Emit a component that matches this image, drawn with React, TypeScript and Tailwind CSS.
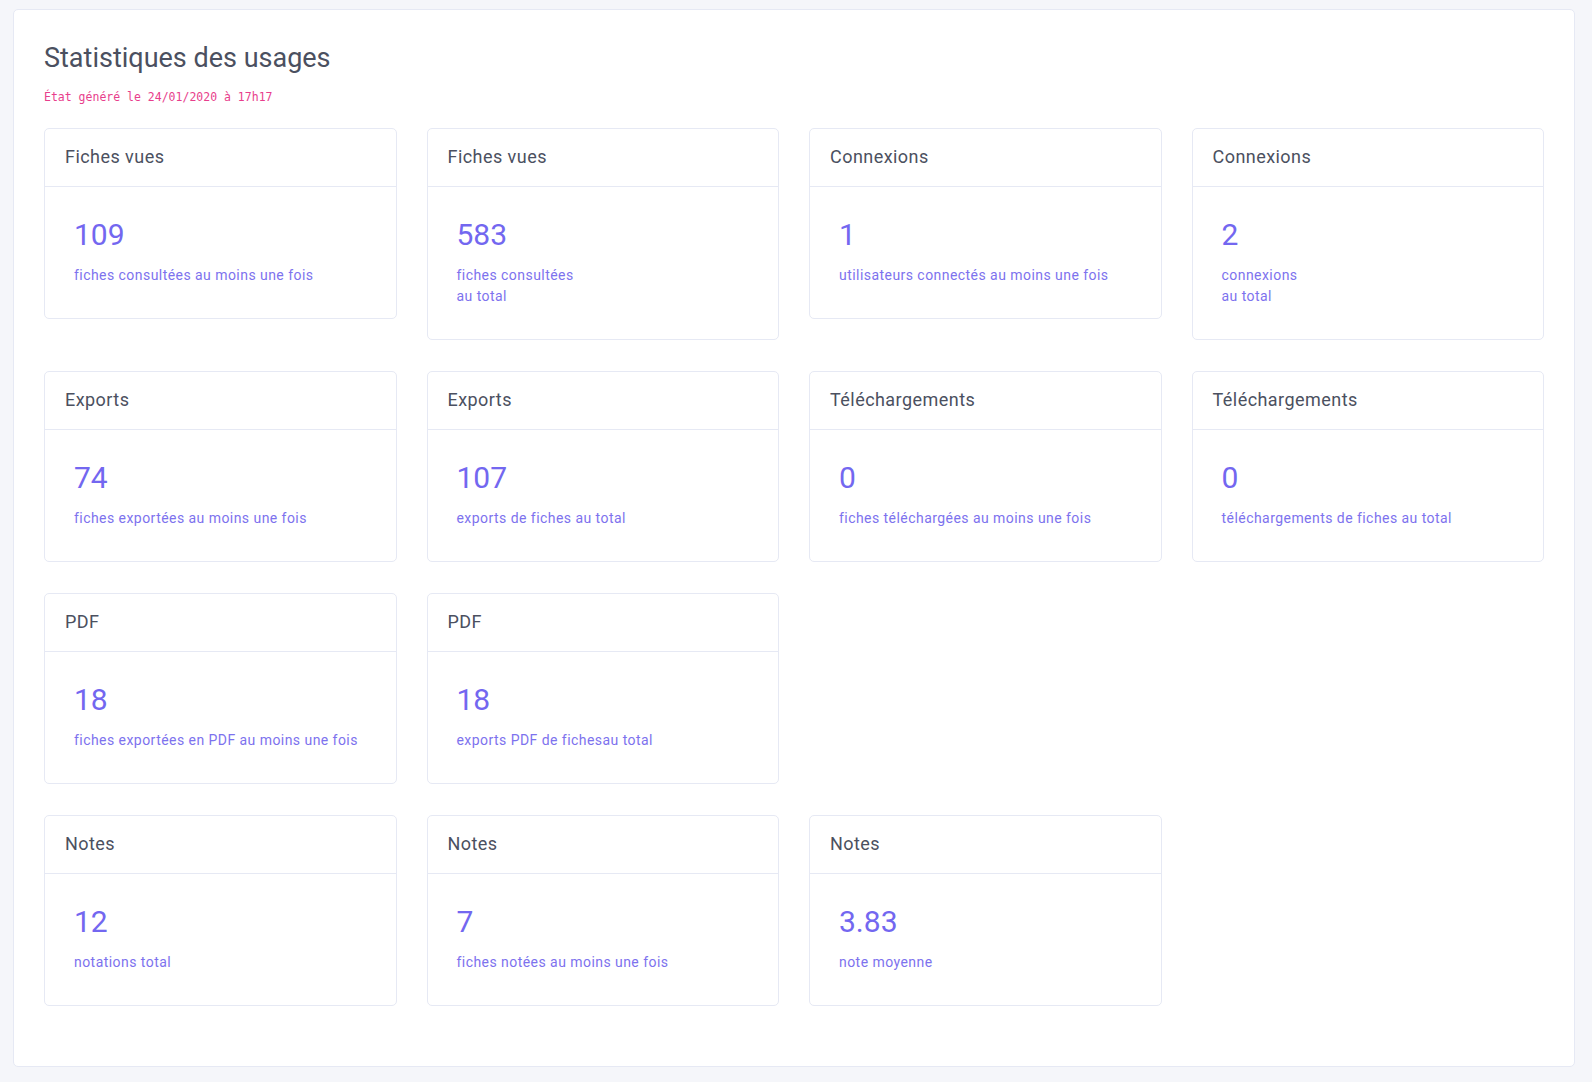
import React from "react";

type Stat = {
  title: string;
  value: string;
  label: string[];
};

const rows: Stat[][] = [
  [
    { title: "Fiches vues", value: "109", label: ["fiches consultées au moins une fois"] },
    { title: "Fiches vues", value: "583", label: ["fiches consultées", "au total"] },
    { title: "Connexions", value: "1", label: ["utilisateurs connectés au moins une fois"] },
    { title: "Connexions", value: "2", label: ["connexions", "au total"] },
  ],
  [
    { title: "Exports", value: "74", label: ["fiches exportées au moins une fois"] },
    { title: "Exports", value: "107", label: ["exports de fiches au total"] },
    { title: "Téléchargements", value: "0", label: ["fiches téléchargées au moins une fois"] },
    { title: "Téléchargements", value: "0", label: ["téléchargements de fiches au total"] },
  ],
  [
    { title: "PDF", value: "18", label: ["fiches exportées en PDF au moins une fois"] },
    { title: "PDF", value: "18", label: ["exports PDF de fichesau total"] },
  ],
  [
    { title: "Notes", value: "12", label: ["notations total"] },
    { title: "Notes", value: "7", label: ["fiches notées au moins une fois"] },
    { title: "Notes", value: "3.83", label: ["note moyenne"] },
  ],
];

function StatCard({ stat }: { stat: Stat }) {
  return (
    <div className="rounded-[5px] border border-[#e6e9f4] bg-white">
      <div className="border-b border-[#e6e9f4] px-5 pt-[14px] pb-[16px] text-[18px] leading-[27px] tracking-[0.45px] text-[#4b5060]">
        {stat.title}
      </div>
      <div className="pt-[30px] pr-[30px] pb-8 pl-[29px]">
        <div className="mb-3 text-[30px] leading-[36px] text-[#7367f0]">
          {stat.value}
        </div>
        <div className="text-[14px] leading-[21px] tracking-[0.45px] text-[#7d72ee]">
          {stat.label.map((l, i) => (
            <div key={i}>{l}</div>
          ))}
        </div>
      </div>
    </div>
  );
}

export default function App() {
  return (
    <div
      className="min-h-[1082px] bg-[#f5f6fa] pt-[9px] pr-[17px] pb-[15px] pl-[13px]"
      style={{ fontFamily: "Roboto, 'Noto Sans', sans-serif" }}
    >
      <div className="rounded-[5px] border border-[#e6e9f4] bg-white p-[30px]">
        <h1 className="mt-[2px] text-[27px] leading-[33px] text-[#4b5060]">
          Statistiques des usages
        </h1>
        <div
          className="mt-[14px] mb-[22px] text-[11.5px] leading-[17px] text-[#e83e8c]"
          style={{ fontFamily: "'DejaVu Sans Mono', monospace" }}
        >
          État généré le 24/01/2020 à 17h17
        </div>
        {rows.map((row, ri) => (
          <div key={ri} className="mb-[31px] grid grid-cols-4 items-start gap-x-[30px] last:mb-[30px]">
            {row.map((s, i) => (
              <StatCard key={i} stat={s} />
            ))}
          </div>
        ))}
      </div>
    </div>
  );
}
